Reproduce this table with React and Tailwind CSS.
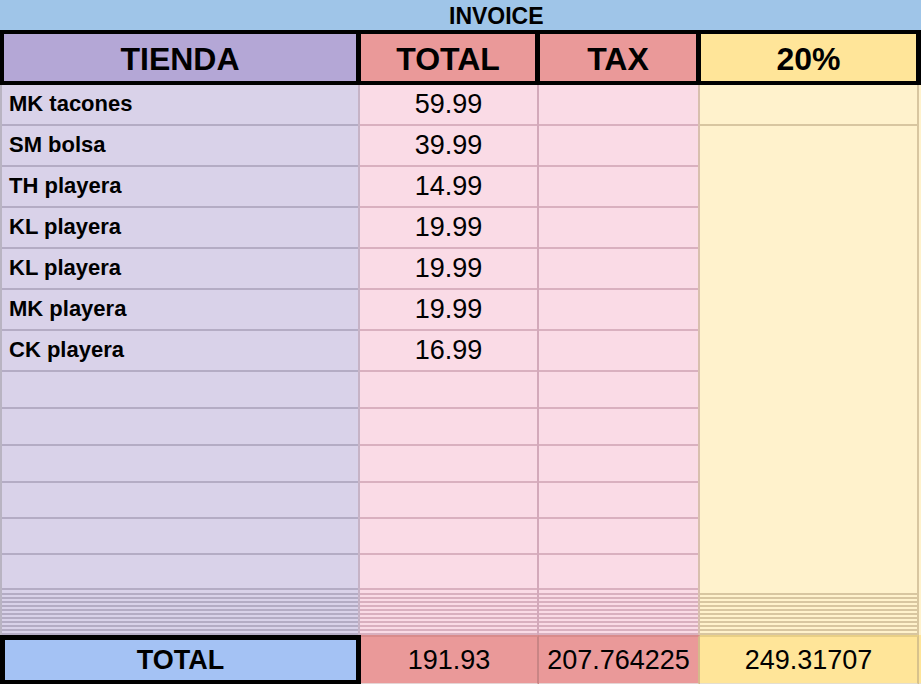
const items = [
  { name: 'MK tacones', total: '59.99' },
  { name: 'SM bolsa', total: '39.99' },
  { name: 'TH playera', total: '14.99' },
  { name: 'KL playera', total: '19.99' },
  { name: 'KL playera', total: '19.99' },
  { name: 'MK playera', total: '19.99' },
  { name: 'CK playera', total: '16.99' },
];

// row heights incl. 2px bottom line
const filledH = 41;
const emptyHeights = [37, 37, 37, 36, 36, 35];
const squashed = Array.from({ length: 11 });

const Squashed = ({ line }) => (
  <div className="flex flex-col pt-[1px]">
    {squashed.map((_, i) => (
      <div key={i} className={`h-[4px] border-b-2 ${line}`} />
    ))}
  </div>
);

const Column = ({ width, bg, line, edge, children }) => (
  <div className={`${width} ${bg} ${edge} flex flex-col shrink-0`}>
    {children}
    {emptyHeights.map((h, i) => (
      <div key={i} className={`border-b-2 ${line}`} style={{ height: h }} />
    ))}
    <Squashed line={line} />
  </div>
);

export default function App() {
  return (
    <div className="w-[921px] h-[684px] overflow-hidden bg-white text-black font-['Liberation_Sans',Arial,sans-serif]">
      {/* title band */}
      <div className="h-[30px] bg-[#9fc5e8] flex items-center pl-[449px]">
        <span className="text-[23px] leading-none font-bold pt-[3px]">INVOICE</span>
      </div>

      {/* header */}
      <div className="flex h-[55px] border-y-4 border-black">
        <div className="w-[356px] border-l-4 border-black bg-[#b4a7d6] flex items-center justify-center pt-[2px] text-[32px] font-bold leading-none">
          TIENDA
        </div>
        <div className="w-[179px] border-l-[5px] border-black bg-[#ea9999] flex items-center justify-center pt-[2px] text-[32px] font-bold leading-none">
          TOTAL
        </div>
        <div className="w-[161px] border-l-[5px] border-black bg-[#ea9999] flex items-center justify-center pt-[2px] text-[32px] font-bold leading-none">
          TAX
        </div>
        <div className="w-[225px] border-x-[5px] border-black bg-[#ffe599] flex items-center justify-center pt-[2px] text-[32px] font-bold leading-none">
          20%
        </div>
      </div>

      {/* body */}
      <div className="flex">
        <Column width="w-[360px]" bg="bg-[#d9d2e9]" line="border-[#b4acc4]" edge="border-l-2 border-l-[#b9b4c2] border-r-2 border-r-[#c6b3c6]">
          {items.map((it, i) => (
            <div key={i} className="border-b-2 border-[#b4acc4] flex items-center pl-[7px] pb-[1px] text-[22px] font-bold leading-none" style={{ height: filledH }}>
              {it.name}
            </div>
          ))}
        </Column>
        <Column width="w-[179px]" bg="bg-[#fadbe6]" line="border-[#d9b0bf]" edge="border-r-2 border-r-[#d3a9ba]">
          {items.map((it, i) => (
            <div key={i} className="border-b-2 border-[#d9b0bf] flex items-center justify-center pb-[1px] text-[27px] leading-none" style={{ height: filledH }}>
              {it.total}
            </div>
          ))}
        </Column>
        <Column width="w-[161px]" bg="bg-[#fadbe6]" line="border-[#d9b0bf]" edge="border-r-2 border-r-[#d8bfae]">
          {items.map((_, i) => (
            <div key={i} className="border-b-2 border-[#d9b0bf]" style={{ height: filledH }} />
          ))}
        </Column>
        <div className="w-[219px] bg-[#fff2cc] border-r-2 border-r-[#d8c6a0] flex flex-col shrink-0">
          <div className="border-b-2 border-[#d8c6a0]" style={{ height: filledH }} />
          <div className="h-[464px]" />
          <Squashed line="border-[#d8c6a0]" />
        </div>
        <div className="flex-1 bg-[#fff2cc]" />
      </div>

      {/* total row */}
      <div className="flex h-[50px]">
        <div className="w-[361px] border-[5px] border-black bg-[#a4c2f4] flex items-center justify-center text-[27px] font-bold leading-none">
          TOTAL
        </div>
        <div className="w-[178px] bg-[#ea9999] border-t-2 border-t-[#d98b8b] border-r-2 border-r-[#c98585] border-b-2 border-b-[#e5d5d5] flex items-center justify-center text-[27px] leading-none">
          191.93
        </div>
        <div className="w-[161px] bg-[#ea9999] border-t-2 border-t-[#d98b8b] border-r-2 border-r-[#d5b98a] border-b-2 border-b-[#e5d5d5] flex items-center justify-center text-[27px] leading-none">
          207.764225
        </div>
        <div className="w-[219px] bg-[#ffe599] border-t-2 border-t-[#e8cf86] border-r-2 border-r-[#d8c28c] border-b-2 border-b-[#e5dfcf] flex items-center justify-center text-[27px] leading-none">
          249.31707
        </div>
        <div className="flex-1 bg-[#ffe599] border-b-2 border-b-[#e5dfcf]" />
      </div>
    </div>
  );
}
